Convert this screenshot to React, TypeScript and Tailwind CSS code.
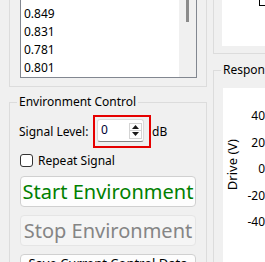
import React from 'react'

const values = ['0.849', '0.831', '0.781', '0.801']
const ticks = ['40', '20', '0', '-20', '-40']

function SpinArrow({ down }: { down?: boolean }) {
  return (
    <svg width="7" height="4" viewBox="0 0 7 4">
      <path d={down ? 'M0 0 L7 0 L3.5 4 Z' : 'M0 4 L7 4 L3.5 0 Z'} fill="#1a1a1a" />
    </svg>
  )
}

export default function App() {
  return (
    <div
      className="w-[265px] h-[262px] overflow-hidden bg-[#f0f0f0] flex text-black"
      style={{ fontFamily: '"Noto Sans", "Liberation Sans", sans-serif' }}
    >
      {/* Left column */}
      <div className="w-[207px] shrink-0 pl-[9px] flex flex-col">
        {/* List group */}
        <div className="border-x border-b border-[#dcdcdc] pl-[10px] pr-[9px] pb-[8px]">
          <div className="w-[177px] h-[78px] flex border-x border-b border-[#828790] bg-white">
            <div className="flex-1 flex flex-col justify-end overflow-hidden">
              {values.map((v, i) => (
                <div key={i} className="h-[18px] shrink-0 leading-[18px] pl-[3px] text-[12px]">
                  {v}
                </div>
              ))}
            </div>
            <div className="w-[17px] bg-[#f0f0f0]">
              <div className="ml-[7px] w-[3px] h-[22px] bg-[#8b8b8b]" />
            </div>
          </div>
        </div>

        {/* Environment Control */}
        <div className="relative mt-[15px] shrink-0 border-x border-t border-[#dcdcdc] pl-[10px] pt-[12px]">
          <div className="absolute top-[-9px] left-[7px] px-[2px] bg-[#f0f0f0] text-[12px] leading-[16px] whitespace-nowrap">
            Environment Control
          </div>

          <div className="flex items-center -ml-[1px]">
            <span className="w-[74px] text-[12px] whitespace-nowrap">Signal Level:</span>
            <div className="w-[58px] h-[33px] border-2 border-[#e60000]">
              <div className="ml-[2px] mt-[2px] w-[47px] h-[23px] flex bg-white border border-[#dadada] border-b-[#868686] rounded-[3px]">
                <span className="flex-1 pl-[3px] text-[12px] leading-[20px] text-[#000033]">0</span>
                <div className="flex flex-col justify-center mr-[1px]">
                  <div className="w-[13px] h-[8px] flex items-center justify-center border border-[#d4d4d4] bg-white">
                    <SpinArrow />
                  </div>
                  <div className="w-[13px] h-[8px] flex items-center justify-center border border-[#d4d4d4] border-t-0 bg-white">
                    <SpinArrow down />
                  </div>
                </div>
              </div>
            </div>
            <span className="ml-[1px] text-[12px]">dB</span>
          </div>

          <div className="mt-[6px] flex items-center h-[13px]">
            <div className="w-[13px] h-[13px] rounded-[3px] border border-[#333333] bg-white" />
            <span className="ml-[5px] text-[12px] whitespace-nowrap">Repeat Signal</span>
          </div>

          <button className="mt-[9px] w-[176px] h-[31px] flex items-center justify-center rounded-[4px] border border-[#d0d0d0] bg-[#fdfdfd] text-[20px] leading-none text-[#008000] whitespace-nowrap">
            Start Environment
          </button>
          <button className="mt-[8px] w-[176px] h-[31px] flex items-center justify-center rounded-[4px] border border-[#e5e5e5] bg-[#f5f5f5] text-[20px] leading-none text-[#858585] whitespace-nowrap">
            Stop Environment
          </button>
          <button className="mt-[8px] w-[176px] h-[31px] flex items-start justify-center pt-[1px] rounded-[4px] border border-[#d0d0d0] bg-[#fdfdfd] text-[13px] leading-[14px] whitespace-nowrap">
            Save Current Control Data
          </button>
        </div>
      </div>

      {/* Right column */}
      <div className="ml-[6px] w-[100px] shrink-0 flex flex-col">
        <div className="h-[54px] border-l border-b border-[#dcdcdc] pl-[8px]">
          <div className="h-[46px] bg-white">
            <div className="ml-[37px] h-[6px] border-l border-b border-black" />
          </div>
        </div>

        <div className="relative mt-[16px] flex-1 border-l border-t border-[#dcdcdc] pl-[9px] pt-[17px]">
          <div className="absolute top-[-9px] left-[7px] px-[2px] bg-[#f0f0f0] text-[12px] leading-[16px] whitespace-nowrap">
            Response
          </div>
          <div className="h-full bg-white flex">
            <div className="ml-[3px] mt-[51px] self-start text-[13px] leading-[13px] whitespace-nowrap [writing-mode:vertical-rl] rotate-180">
              Drive (V)
            </div>
            <div className="w-[26px] pt-[15px] flex flex-col items-end">
              {ticks.map((t) => (
                <div key={t} className="h-[26.5px] leading-[26.5px] text-[12px]">
                  {t}
                </div>
              ))}
            </div>
          </div>
        </div>
      </div>
    </div>
  )
}
